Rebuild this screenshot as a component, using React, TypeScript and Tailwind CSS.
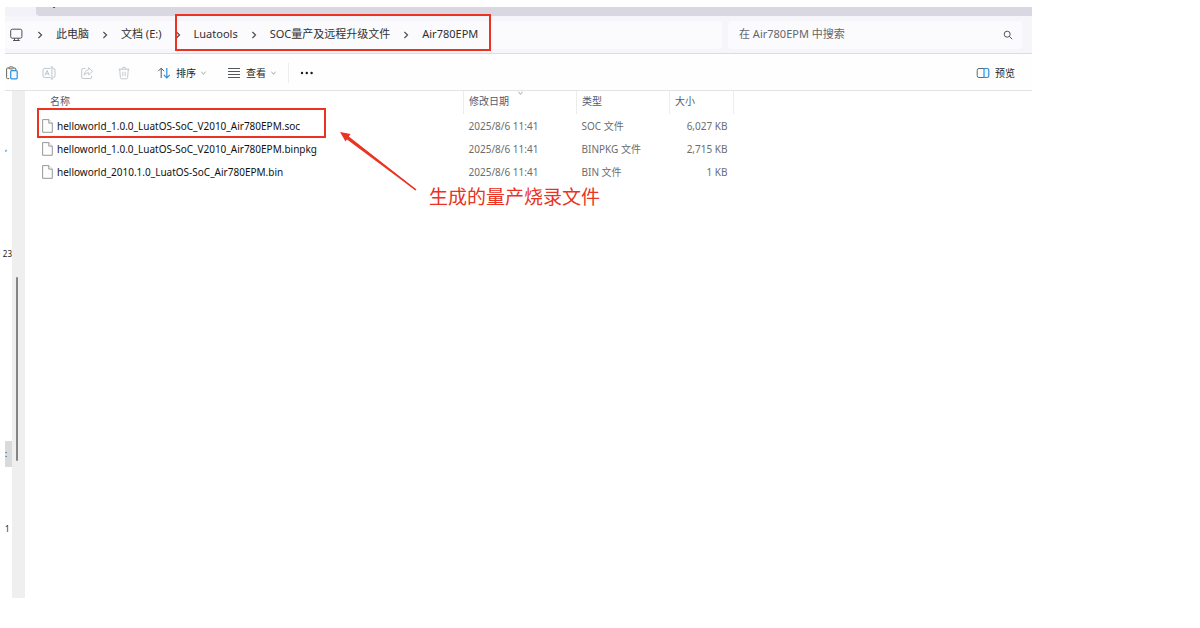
import React from "react";

const files = [
  { name: "helloworld_1.0.0_LuatOS-SoC_V2010_Air780EPM.soc", date: "2025/8/6 11:41", type: "SOC 文件", size: "6,027 KB", marked: true },
  { name: "helloworld_1.0.0_LuatOS-SoC_V2010_Air780EPM.binpkg", date: "2025/8/6 11:41", type: "BINPKG 文件", size: "2,715 KB", marked: false },
  { name: "helloworld_2010.1.0_LuatOS-SoC_Air780EPM.bin", date: "2025/8/6 11:41", type: "BIN 文件", size: "1 KB", marked: false },
];

function Separator() {
  return (
    <span className="flex w-8 shrink-0 justify-center" aria-hidden="true">
      <svg className="size-2" viewBox="0 0 8 8" fill="none" stroke="#4a4a4e" strokeWidth="1.1">
        <path d="M2.4 1 5.6 4 2.4 7" />
      </svg>
    </span>
  );
}

function Caret() {
  return (
    <svg className="h-1 w-[5px]" viewBox="0 0 5 4" fill="none" stroke="#8a8a8a" strokeWidth="0.9" aria-hidden="true">
      <path d="M0.4 1 2.5 3 4.6 1" />
    </svg>
  );
}

function Crumb({ children }: { children: React.ReactNode }) {
  return (
    <a href="#" className="whitespace-nowrap text-[11px] text-[#303034]">
      {children}
    </a>
  );
}

function AddressBar() {
  return (
    <div className="flex h-[38px] items-center gap-[6px] border-b border-[#dcdbe0] bg-[#f6f6fa] pr-[10px]">
      <nav aria-label="路径" className="flex h-7 flex-1 items-center rounded bg-[#fbfbfd] pl-[5px]">
        <svg className="h-[14px] w-[14px] shrink-0" viewBox="0 0 14 14" fill="none" stroke="#4f4f55" strokeWidth="1" aria-hidden="true">
          <rect x="0.700" y="1.2" width="11.2" height="9" rx="1.6" />
          <path d="M4.500 10.2v2.2M8.2 10.2v2.2M3.100 12.5h6.6" />
        </svg>
        <Separator />
        <Crumb>此电脑</Crumb>
        <Separator />
        <Crumb>文档 (E:)</Crumb>
        <div className="relative flex items-center">
          <Separator />
          <Crumb>Luatools</Crumb>
          <Separator />
          <Crumb>SOC量产及远程升级文件</Crumb>
          <Separator />
          <Crumb>Air780EPM</Crumb>
          <span className="pointer-events-none absolute -bottom-2 -right-[13px] -top-3 left-[13px] border-2 border-[#ea3323]" />
        </div>
      </nav>
      <label className="flex h-7 w-[294px] items-center rounded bg-[#fbfbfd] pl-[11px] pr-[9px]">
        <input
          type="search"
          aria-label="搜索"
          placeholder="在 Air780EPM 中搜索"
          className="min-w-0 flex-1 bg-transparent text-[11px] outline-none placeholder:text-[#66666a]"
        />
        <svg className="size-[10px]" viewBox="0 0 10 10" fill="none" stroke="#55555a" strokeWidth="1" aria-hidden="true">
          <circle cx="4.2" cy="4.2" r="3" />
          <path d="M6.4 6.4 9.2 9.2" />
        </svg>
      </label>
    </div>
  );
}

function Toolbar() {
  return (
    <div className="flex h-[37px] items-center border-b border-[#e3e3e6] bg-[#fefefe] pr-[17px] pt-[2px] text-[10px] text-[#1f1f1f]">
      <button aria-label="粘贴" className="mr-[23px]">
        <svg className="size-[14px]" viewBox="0 0 14 14" fill="none">
          <path d="M4.2 12.6H2.6a1 1 0 0 1-1-1V3a1 1 0 0 1 1-1H4M8.4 2h1.4a1 1 0 0 1 1 1v1" stroke="#6b6253" />
          <rect x="4" y="0.9" width="4.4" height="2" rx="1" stroke="#6b6253" />
          <rect x="5.7" y="4.6" width="6.5" height="8.2" rx="1" stroke="#2f8fdc" strokeWidth="1.2" fill="#f1f8fe" />
        </svg>
      </button>
      <button aria-label="重命名" disabled className="mr-[24px]">
        <svg className="size-[14px]" viewBox="0 0 14 14" fill="none" stroke="#bcc6cf">
          <path d="M8.6 2.4H2.8A1.8 1.8 0 0 0 1 4.200v5.600a1.800 1.800 0 0 0 1.800 1.800h5.800M11 2.400a1.900 1.900 0 0 1 2 1.800v5.600a1.900 1.900 0 0 1-2 1.800M9.900 1v12M8.700 1h2.400M8.700 13h2.400M3 9.400l2.100-5 2.100 5M3.800 7.800h2.700" />
        </svg>
      </button>
      <button aria-label="共享" disabled className="mr-[23px]">
        <svg className="size-[14px]" viewBox="0 0 14 14" fill="none" stroke="#c4c8cc">
          <path d="M5.500 2.500H3.200a1.500 1.500 0 0 0-1.500 1.500v7a1.500 1.500 0 0 0 1.500 1.500h7a1.500 1.500 0 0 0 1.500-1.500V9.800M8.600 1.700l4 3.600-4 3.500V6.800C6.500 6.800 5.200 7.500 4.200 9.200c.2-3 1.700-5 4.400-5.400z" />
        </svg>
      </button>
      <button aria-label="删除" disabled className="mr-[26px]">
        <svg className="size-[14px]" viewBox="0 0 14 14" fill="none" stroke="#c4c8cc">
          <path d="M1.500 3.200h11M5 3.200a2 2 0 0 1 4 0M2.700 3.200l.7 8.400a1.300 1.300 0 0 0 1.300 1.200h4.600a1.300 1.300 0 0 0 1.300-1.200l.7-8.400M5.800 5.800v4.400M8.200 5.800v4.400" />
        </svg>
      </button>
      <button className="mr-[21px] flex items-center gap-[5px]">
        <svg className="size-[14px]" viewBox="0 0 14 14" fill="none">
          <path d="M4.200 12V2.200M1.200 5.200l3-3 3 3" stroke="#55595d" />
          <path d="M9.800 2v9.800M6.800 8.800l3 3 3-3" stroke="#2f8fdc" strokeWidth="1.200" />
        </svg>
        <span>排序</span>
        <Caret />
      </button>
      <button className="flex items-center gap-[5px]">
        <svg className="size-[14px]" viewBox="0 0 14 14" fill="none" stroke="#55595d">
          <path d="M1 2.500h12M1 5.500h12M1 8.500h12M1 11.500h12" />
        </svg>
        <span>查看</span>
        <Caret />
      </button>
      <span className="ml-3 h-5 w-px bg-[#ededed]" />
      <button aria-label="更多" className="ml-[11px]">
        <svg className="size-[14px]" viewBox="0 0 14 14" fill="#1b1b1b">
          <circle cx="2" cy="7" r="1.200" />
          <circle cx="6.800" cy="7" r="1.200" />
          <circle cx="11.600" cy="7" r="1.200" />
        </svg>
      </button>
      <button className="ml-auto flex items-center gap-[5px]">
        <svg className="size-[14px]" viewBox="0 0 14 14" fill="none">
          <path d="M8 2.500H3A1.800 1.800 0 0 0 1.200 4.300v5.400A1.800 1.800 0 0 0 3 11.500h5" stroke="#63676b" />
          <path d="M8 2.500h3a1.800 1.800 0 0 1 1.800 1.800v5.400a1.800 1.800 0 0 1-1.800 1.800H8z" stroke="#2f8fdc" strokeWidth="1.200" fill="#e9f4fd" />
        </svg>
        <span>预览</span>
      </button>
    </div>
  );
}

function FileTable() {
  return (
    <table className="w-[697px] table-fixed border-collapse text-left">
      <colgroup>
        <col />
        <col className="w-[113px]" />
        <col className="w-[93px]" />
        <col className="w-[64px]" />
      </colgroup>
      <thead>
        <tr className="h-[23px] text-[10px] text-[#4e5b74]">
          <th className="border-r border-[#ececee] p-0 pb-[2px] pl-[13px] font-normal">名称</th>
          <th className="relative border-r border-[#ececee] p-0 pb-[2px] pl-[5px] font-normal">
            修改日期
            <span className="absolute left-[54px] top-0 flex">
              <Caret />
            </span>
          </th>
          <th className="border-r border-[#ececee] p-0 pb-[2px] pl-[5px] font-normal">类型</th>
          <th className="border-r border-[#ececee] p-0 pb-[2px] pl-[5px] font-normal">大小</th>
        </tr>
      </thead>
      <tbody>
        {files.map((file) => (
          <tr key={file.name} className="h-[23px] text-[10px] text-[#6d6d6d]">
            <td className="relative p-0 pl-[5px]">
              <a href="#" className="flex items-center gap-1 whitespace-nowrap text-[10px] leading-4 text-[#111]">
                <svg className="h-[14px] w-[11px] shrink-0" viewBox="0 0 11 14" fill="#fdfdfd" stroke="#8c8c8c" strokeWidth="0.9" aria-hidden="true">
                  <path d="M0.600 0.600h6.200l3.500 3.500v9.200H0.600z" />
                  <path d="M6.800 0.600v3.500h3.500" />
                </svg>
                {file.name}
              </a>
              {file.marked && (
                <span className="pointer-events-none absolute -top-[6px] left-0 h-[30px] w-[289px] border-2 border-[#ea3323]" />
              )}
            </td>
            <td className="p-0 pl-[5px] pt-[2px]">{file.date}</td>
            <td className="p-0 pl-[5px] pt-[2px]">{file.type}</td>
            <td className="p-0 pr-[6px] pt-[2px] text-right">{file.size}</td>
          </tr>
        ))}
      </tbody>
    </table>
  );
}

function Sidebar() {
  return (
    <aside className="flex w-[7px] flex-col whitespace-nowrap text-[8px] leading-3 text-[#222]">
      <span className="mt-[51px]">,</span>
      <span className="mt-[94px] flex justify-end">23</span>
      <span className="mt-[181px] flex h-[26px] items-center bg-[#dadada]">:</span>
      <span className="mt-[56px]">1</span>
    </aside>
  );
}

export default function App() {
  return (
    <main className="min-h-screen bg-white pt-[7px] font-['Noto_Sans','Noto_Sans_CJK_SC',sans-serif]">
      <div className="ml-[5px] mr-[14%]">
        <div className="flex h-[9px] bg-[#f3f2f8] pl-[31px]">
          <div className="flex-1 rounded-bl bg-[#d9d7e2] pl-[17px]">
            <div className="h-px w-[2px] bg-[#55555a]" />
          </div>
        </div>
        <AddressBar />
        <Toolbar />
        <div className="flex min-h-[507px]">
          <Sidebar />
          <div className="w-[13px] bg-[#efefef] pl-1">
            <div className="mt-[186px] h-[184px] w-[2px] rounded bg-[#858585]" />
          </div>
          <section className="relative flex-1 pl-3">
            <FileTable />
            <svg className="absolute left-[312px] top-[38px] h-[64px] w-[84px]" viewBox="0 0 84 64" aria-hidden="true">
              <path d="M10 7 79 61" stroke="#ea3323" strokeWidth="1.500" />
              <path d="M3 3 13.500 5 8.500 12.500z" fill="#ea3323" />
              <path d="M9 6 79 60.500 78 61 8 9z" fill="#ea3323" />
            </svg>
            <p className="absolute left-[404px] top-[92px] whitespace-nowrap text-[19px] leading-7 text-[#ea3323]">
              生成的量产烧录文件
            </p>
          </section>
        </div>
      </div>
    </main>
  );
}
